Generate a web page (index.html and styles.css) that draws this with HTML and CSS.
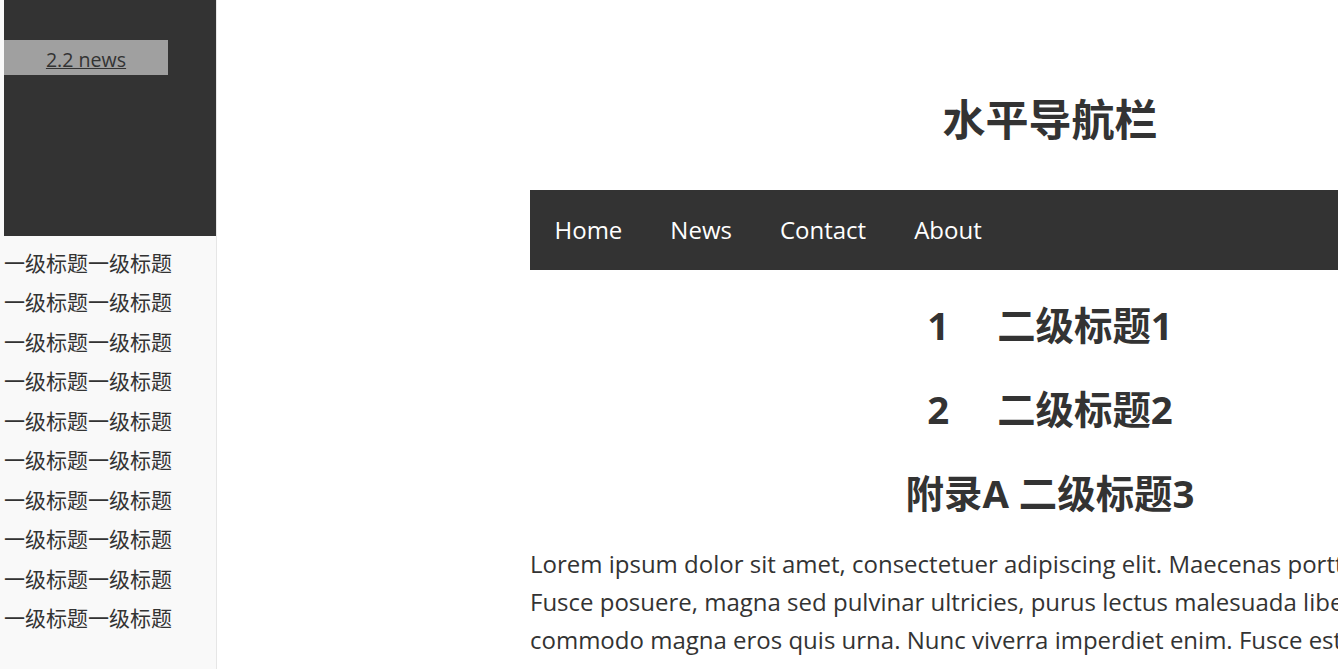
FILE: index.html
```html
<!DOCTYPE html>
<html lang="zh">
<head>
<meta charset="utf-8">
<title>水平导航栏</title>
<link rel="stylesheet" href="styles.css">
</head>
<body>
<div class="page">
  <aside class="sidebar">
    <div class="side-top">
      <div class="side-link-box"><a href="#" class="side-link">2.2 news</a></div>
    </div>
    <ul class="side-list">
      <li>一级标题一级标题</li>
      <li>一级标题一级标题</li>
      <li>一级标题一级标题</li>
      <li>一级标题一级标题</li>
      <li>一级标题一级标题</li>
      <li>一级标题一级标题</li>
      <li>一级标题一级标题</li>
      <li>一级标题一级标题</li>
      <li>一级标题一级标题</li>
      <li>一级标题一级标题</li>
    </ul>
  </aside>
  <main class="main">
    <div class="content">
      <h1 class="title">水平导航栏</h1>
      <nav class="topnav">
        <a href="#">Home</a>
        <a href="#">News</a>
        <a href="#">Contact</a>
        <a href="#">About</a>
      </nav>
      <h2 class="sub"><span class="num">1</span>二级标题1</h2>
      <h2 class="sub"><span class="num">2</span>二级标题2</h2>
      <h2 class="sub">附录A 二级标题3</h2>
      <p class="text">Lorem ipsum dolor sit amet, consectetuer adipiscing elit. Maecenas porttitor congue massa. Fusce posuere, magna sed pulvinar ultricies, purus lectus malesuada libero, sit amet commodo magna eros quis urna. Nunc viverra imperdiet enim. Fusce est. Vivamus a tellus. Pellentesque habitant morbi tristique senectus et netus et malesuada fames ac turpis egestas.</p>
    </div>
  </main>
</div>
</body>
</html>
```
FILE: styles.css
```css
html, body {
  margin: 0;
  padding: 0;
  overflow: hidden;
}
body {
  font-family: "Open Sans", "Noto Sans CJK SC", sans-serif;
  color: #333;
  background: #fff;
}
.page {
  display: flex;
  align-items: stretch;
  min-height: 100vh;
}
.sidebar {
  flex: 0 0 212px;
  width: 212px;
  padding-left: 4px;
  background: #f9f9f9;
  border-right: 1px solid #e6e6e6;
  min-height: 669px;
}
.side-top {
  height: 236px;
  background: #333;
  padding-top: 40px;
  box-sizing: border-box;
}
.side-link-box {
  width: 164px;
  height: 35px;
  background: #a0a0a0;
  display: flex;
  align-items: center;
  justify-content: center;
}
.side-link {
  color: #333;
  font-size: 19.6px;
  line-height: 35px;
  padding-top: 4px;
  text-decoration: underline;
}
.side-list {
  list-style: none;
  margin: 8px 0 0;
  padding: 0;
}
.side-list li {
  font-size: 21px;
  line-height: 39.45px;
  white-space: nowrap;
  color: #333;
}
.main {
  flex: 0 0 auto;
  padding-left: 313px;
}
.content {
  width: 1040px;
}
.title {
  margin: 0 0 42px;
  padding-top: 92px;
  font-size: 43px;
  line-height: 56px;
  text-align: center;
  font-weight: 700;
}
.topnav {
  display: flex;
  height: 80px;
  background: #333;
  align-items: center;
}
.topnav a {
  color: #fff;
  text-decoration: none;
  font-size: 24px;
  padding: 0 24px;
  line-height: 80px;
}
.topnav a:first-child {
  padding-left: 24.5px;
}
.sub {
  margin: 0;
  text-align: center;
  font-size: 38.4px;
  font-weight: 700;
  line-height: 84px;
}
.sub:first-of-type {
  margin-top: 13px;
}
.num {
  display: inline-block;
  margin-right: 48px;
}
.text {
  margin: 10px 0 0;
  font-size: 24px;
  line-height: 38px;
}
```
